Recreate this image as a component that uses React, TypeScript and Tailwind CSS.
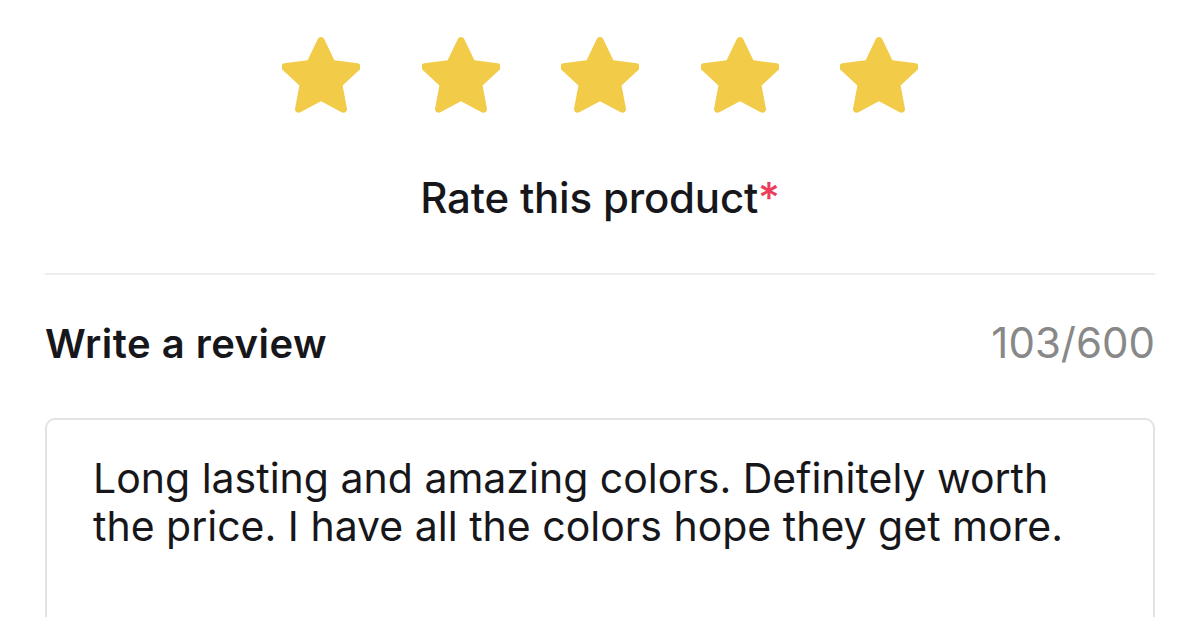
const stars = [1, 2, 3, 4, 5]

function Star() {
  return (
    <svg width="78" height="76" viewBox="2.25 1.2 19.5 19.2" preserveAspectRatio="none" className="block">
      <path
        d="M12 1.2c.35 0 .66.2.8.52l2.55 5.38 5.85.75c.76.1 1.06 1.04.5 1.56l-4.3 4.06 1.08 5.8c.14.75-.65 1.33-1.32.96L12 17.4l-5.16 2.83c-.67.37-1.46-.2-1.32-.96l1.08-5.8-4.3-4.06c-.56-.52-.26-1.46.5-1.56l5.85-.75 2.55-5.38c.14-.32.45-.52.8-.52z"
        fill="#F2CC48"
      />
    </svg>
  )
}

export default function App() {
  return (
    <div className="w-[1200px] h-[617px] overflow-hidden bg-white px-[45px] font-['Inter',sans-serif] text-[#17171b]">
      {/* Rating */}
      <div className="flex justify-center gap-[61.5px] pt-[37px]">
        {stars.map((s) => (
          <Star key={s} />
        ))}
      </div>
      <div className="mt-[64px] text-center text-[42px] leading-none font-medium tracking-[-0.2px]">
        Rate this product<span className="text-[#ee3d5b]">*</span>
      </div>
      <div className="mt-[54px] h-[2px] bg-[#ededed]" />

      {/* Review */}
      <div className="mt-[47px] flex items-baseline justify-between">
        <span className="text-[40px] leading-none font-semibold tracking-[0.5px]">Write a review</span>
        <span className="text-[42px] leading-none text-[#888888]">103/600</span>
      </div>
      <div className="mt-[54px] h-[260px] rounded-[10px] border-2 border-[#e3e3e3] pl-[46px] pr-[50px] pt-[34px]">
        <p className="text-[41px] leading-[48px]">
          Long lasting and amazing colors. Definitely worth the price. I have all the colors hope they get more.
        </p>
      </div>
    </div>
  )
}
